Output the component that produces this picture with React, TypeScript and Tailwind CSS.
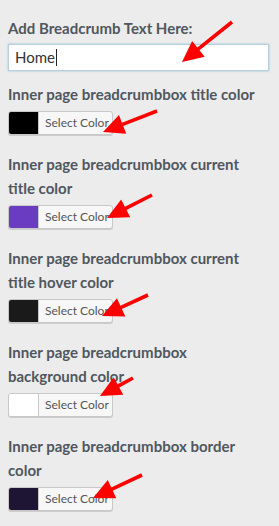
import type { ReactNode } from 'react'

const font = { fontFamily: 'Lato, "Open Sans", "DejaVu Sans", sans-serif' }

function ColorField({ label, swatch }: { label: ReactNode; swatch: string }) {
  return (
    <div className="mt-[17px] first:mt-0">
      <div className="text-[15px] font-bold leading-[24px] text-[#50575e]">{label}</div>
      <button className="mt-[5px] flex h-[24px] w-[105px] items-stretch overflow-hidden rounded-[3px] border border-[#c8c8c8] bg-[#f7f7f7] shadow-[0_1px_0_#ccc]">
        <span className={`w-[30px] border-r border-[#c8c8c8] ${swatch}`} />
        <span className="flex flex-1 items-center pl-[6px] text-[12px] text-[#555]">Select Color</span>
      </button>
    </div>
  )
}

function Arrow({ x1, y1, x2, y2 }: { x1: number; y1: number; x2: number; y2: number }) {
  const dx = x2 - x1
  const dy = y2 - y1
  const len = Math.hypot(dx, dy)
  const ux = dx / len
  const uy = dy / len
  const px = -uy
  const py = ux
  const headLen = 21
  const headW = 10
  const shaft = 1.8
  const bx = x2 - ux * headLen
  const by = y2 - uy * headLen
  const pts = [
    [x1 + px * shaft, y1 + py * shaft],
    [bx + px * shaft, by + py * shaft],
    [bx + px * headW, by + py * headW],
    [x2, y2],
    [bx - px * headW, by - py * headW],
    [bx - px * shaft, by - py * shaft],
    [x1 - px * shaft, y1 - py * shaft],
  ]
  return <polygon points={pts.map((p) => p.join(',')).join(' ')} fill="#ff0000" />
}

export default function App() {
  return (
    <div className="relative min-h-[526px] w-[279px] bg-[#ececec]" style={font}>
      <div className="px-[8px] pt-[16px]">
        <div className="text-[15px] font-bold leading-[24px] text-[#50575e]">Add Breadcrumb Text Here:</div>
        <div className="mt-[4px] flex h-[27px] w-[261px] items-center border border-[#b9cfdb] bg-white pl-[6px] text-[15px] text-[#333] shadow-[0_0_2px_rgba(30,140,190,0.4)]">
          Home<span className="ml-[1px] inline-block h-[17px] w-px bg-[#222]" />
        </div>

        <div className="mt-[11px] flex flex-col">
          <ColorField label="Inner page breadcrumbbox title color" swatch="bg-black" />
          <ColorField label={<>Inner page breadcrumbbox current<br />title color</>} swatch="bg-[#6a3dc0]" />
          <ColorField label={<>Inner page breadcrumbbox current<br />title hover color</>} swatch="bg-[#1a1a1a]" />
          <ColorField label={<>Inner page breadcrumbbox<br />background color</>} swatch="bg-white" />
          <ColorField label={<>Inner page breadcrumbbox border<br />color</>} swatch="bg-[#1e1434]" />
        </div>
      </div>

      <svg className="pointer-events-none absolute left-0 top-0" width="279" height="526">
        <Arrow x1={232} y1={22} x2={182} y2={62} />
        <Arrow x1={157} y1={111} x2={103} y2={132} />
        <Arrow x1={152} y1={195} x2={107} y2={218} />
        <Arrow x1={148} y1={295} x2={102} y2={316} />
        <Arrow x1={133} y1={378} x2={100} y2={396} />
        <Arrow x1={142} y1={475} x2={93} y2={498} />
      </svg>
    </div>
  )
}
